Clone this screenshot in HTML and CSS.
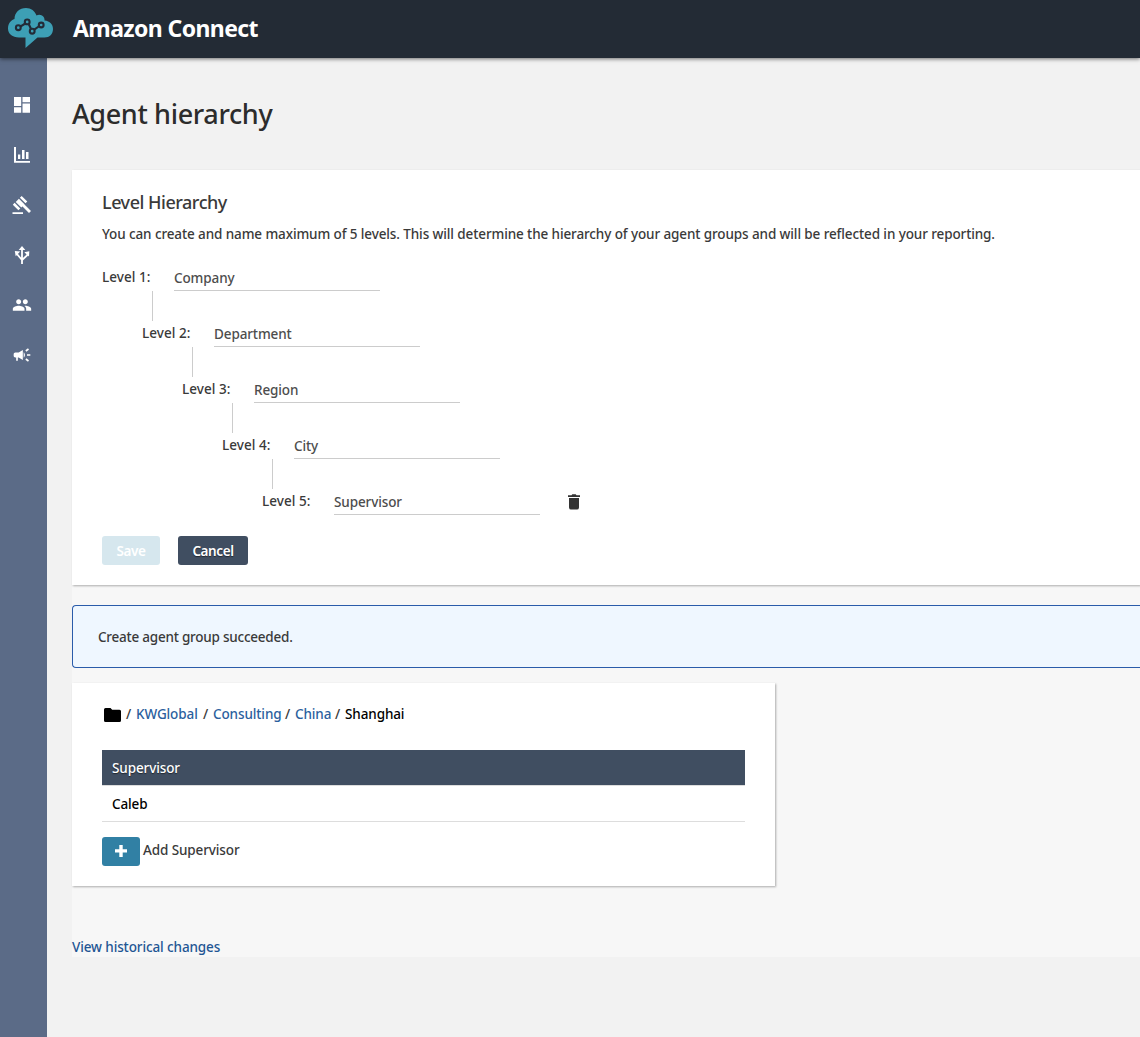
FILE: index.html
```html
<!DOCTYPE html>
<html lang="en">
<head>
<meta charset="utf-8">
<title>Amazon Connect - Agent hierarchy</title>
<link rel="stylesheet" href="styles.css">
</head>
<body>
<header class="topbar">
  <svg class="logo" width="46" height="40" viewBox="0 0 46 40">
    <path fill="#3d9fb5" d="M11 29.500C4.500 29.500 0 26 0 20.500C0 15.500 3 12 6.500 11C6.500 4.500 11.500 0 18 0C23 0 27 3 28.500 7.500C30 6.500 32 6.300 34 7.400C36 8.600 36.800 10.500 36.500 12.500C42 13 45 16.500 45 21C45 26 41.500 29.500 36.500 29.500H29.500L17.500 40V29.500Z"/>
    <g fill="none" stroke="#232b37" stroke-width="2.100">
      <path d="M12.300 18.700L17.300 15.500M20.600 15.800L23.200 21.300M26 21.900L31.300 18"/>
      <circle cx="10.300" cy="19.700" r="2.400"/><circle cx="19.200" cy="13.900" r="2.400"/><circle cx="24.200" cy="23.200" r="2.400"/><circle cx="33.200" cy="17" r="2.400"/>
    </g>
  </svg>
  <span class="brand">Amazon Connect</span>
</header>
<div class="shell">
  <nav class="sidebar">
    <a class="nav-item"><svg width="20" height="20" viewBox="0 0 20 20"><path d="M2 2h7.200v9H2zM2 12.200h7.200v5.600H2zM10.500 2H18v5.200h-7.500zM10.500 8.500H18v9.300h-7.500z"/></svg></a>
    <a class="nav-item"><svg width="20" height="20" viewBox="0 0 20 20"><path d="M2 2h2v14h14v1.800H2zM6 9.500h2.300V14H6zM10 5h2.500v9H10zM14 7h2.500v7H14z"/></svg></a>
    <a class="nav-item"><svg width="20" height="20" viewBox="0 0 20 20"><path d="M.500 17.200h10.500V19H.500zM9.700.900l5.600 5.500-1.800 1.800L7.900 2.700zM2.600 7.800l5.700 5.600-1.900 1.900L.800 9.700zM6.900 3.700l5.600 5.500-3.200 3.200-5.600-5.500zM12 9l7 7-2 2-7-7z"/></svg></a>
    <a class="nav-item"><svg width="20" height="20" viewBox="0 0 20 20"><g fill="none" stroke="#fff" stroke-width="1.800"><path d="M10 3v16M10 15L4.500 8.500M10 15l5-4.500 1-2"/></g><path d="M10 1l3.300 4H6.700zM2.800 6l5.400.600-4.500 4.700zM17.300 6.300l-.300 5.300-4.700-4.400z"/></svg></a>
    <a class="nav-item"><svg width="20" height="20" viewBox="0 0 24 24"><path d="M16 11c1.660 0 2.990-1.340 2.990-3S17.660 5 16 5s-3 1.340-3 3 1.340 3 3 3zm-8 0c1.660 0 2.990-1.340 2.990-3S9.660 5 8 5 5 6.340 5 8s1.340 3 3 3zm0 2c-2.330 0-7 1.170-7 3.500V19h14v-2.500c0-2.330-4.670-3.500-7-3.500zm8 0c-.290 0-.620.020-.970.050 1.160.840 1.970 1.970 1.970 3.450V19h6v-2.500c0-2.330-4.670-3.500-7-3.500z"/></svg></a>
    <a class="nav-item"><svg width="20" height="20" viewBox="0 0 24 24"><path d="M18 11v2h4v-2zM16 17.610c.960.710 2.210 1.650 3.200 2.390l1.200-1.600c-.990-.740-2.240-1.680-3.200-2.400zM20.400 5.600L19.200 4c-.990.740-2.240 1.680-3.200 2.400l1.200 1.600c.960-.720 2.210-1.650 3.200-2.400zM4 9c-1.100 0-2 .900-2 2v2c0 1.100.900 2 2 2h1v4h2v-4h1l5 3V6L8 9zM15.500 12c0-1.330-.580-2.530-1.500-3.350v6.690c.920-.810 1.500-2.010 1.500-3.340z"/></svg></a>
  </nav>
  <main class="main">
    <h1 class="page-title">Agent hierarchy</h1>
    <div class="content">
      <section class="card levels-card">
        <h2 class="card-title">Level Hierarchy</h2>
        <p class="description">You can create and name maximum of 5 levels. This will determine the hierarchy of your agent groups and will be reflected in your reporting.</p>
        <div class="levels">
          <div class="level"><span class="label">Level 1:</span><span class="field">Company</span></div>
          <div class="level"><span class="label">Level 2:</span><span class="field">Department</span></div>
          <div class="level"><span class="label">Level 3:</span><span class="field">Region</span></div>
          <div class="level"><span class="label">Level 4:</span><span class="field">City</span></div>
          <div class="level"><span class="label">Level 5:</span><span class="field">Supervisor</span>
            <svg class="trash" width="12" height="16" viewBox="0 0 12 16"><path fill="#333" d="M0 1.300h3.500L4.300.300h3.400l.800 1H12V3H0zM1 4h10v9.500a2 2 0 0 1-2 2H3a2 2 0 0 1-2-2z"/></svg>
          </div>
        </div>
        <div class="actions"><button class="btn save">Save</button><button class="btn cancel">Cancel</button></div>
      </section>
      <div class="alert">Create agent group succeeded.</div>
      <section class="card groups-card">
        <div class="crumbs">
          <svg class="folder" width="17" height="14" viewBox="0 0 17 14"><path d="M1.500 0h5L8.200 1.700h7.300A1.500 1.500 0 0 1 17 3.200v9.300a1.500 1.500 0 0 1-1.500 1.500h-14A1.500 1.500 0 0 1 0 12.500v-11A1.500 1.500 0 0 1 1.500 0z"/></svg>
          <span class="sep">/</span><a class="link kw">KWGlobal</a><span class="sep">/</span><a class="link consulting">Consulting</a><span class="sep">/</span><a class="link china">China</a><span class="sep">/</span><span class="current">Shanghai</span>
        </div>
        <div class="table-head">Supervisor</div>
        <div class="table-row">Caleb</div>
        <div class="add-row">
          <button class="add" aria-label="Add"><svg width="14" height="14" viewBox="0 0 14 14"><path fill="#fff" d="M5.300 1h3.400v4.300H13v3.200H8.700V13H5.300V8.500H1V5.300h4.300z"/></svg></button>
          <span class="add-label">Add Supervisor</span>
        </div>
      </section>
      <a class="history">View historical changes</a>
    </div>
  </main>
</div>
</body>
</html>
```
FILE: styles.css
```css
* { box-sizing: border-box; }
body {
  margin: 0;
  height: 1037px;
  overflow: hidden;
  display: flex;
  flex-direction: column;
  background: #f2f2f2;
  color: #3a3a3a;
  font: 500 13.500px/20px "Noto Sans", sans-serif;
  letter-spacing: -0.110px;
  white-space: nowrap;
}
.topbar {
  height: 58px;
  flex: none;
  display: flex;
  align-items: flex-start;
  padding: 8px 0 0 8px;
  background: #232b35;
  box-shadow: 0 1px 4px rgba(0, 0, 0, .55);
  position: relative;
}
.brand {
  margin-left: 19px;
  color: #fff;
  font-size: 23px;
  font-weight: 700;
  line-height: 40px;
  letter-spacing: -0.600px;
}
.shell { flex: 1; display: flex; }
.sidebar { width: 47px; flex: none; padding-top: 22px; background: #5b6b87; }
.nav-item { display: flex; height: 50px; padding-left: 12px; align-items: center; }
.nav-item svg { fill: #fff; }
.main { flex: 1; padding-left: 25px; }
.page-title {
  margin: 0;
  height: 112px;
  padding-top: 36px;
  color: #2c2c2c;
  font-size: 27px;
  font-weight: 500;
  line-height: 40px;
  letter-spacing: -0.350px;
}
.content { height: 787px; background: #f7f7f7; }
.card { background: #fff; box-shadow: 1px 1px 2px rgba(0, 0, 0, .3); }
.levels-card { height: 415px; padding: 20px 30px; }
.card-title { margin: 0; font-size: 18px; font-weight: 500; line-height: 24px; letter-spacing: -0.480px; }
.description { margin: 10px 0 21px; }
.level { display: flex; height: 56px; position: relative; }
.level:nth-child(2) { margin-left: 40px; }
.level:nth-child(3) { margin-left: 80px; }
.level:nth-child(4) { margin-left: 120px; }
.level:nth-child(5) { margin-left: 160px; height: 26px; }
.level:not(:last-child)::after {
  content: "";
  position: absolute;
  left: 50px;
  top: 26px;
  width: 1px;
  height: 30px;
  background: #ccc;
}
.label { width: 72px; line-height: 24px; letter-spacing: 0.050px; }
.field { width: 206px; height: 26px; line-height: 26px; border-bottom: 1px solid #ccc; color: #4d4d4d; }
.trash { margin: 5px 0 0 28px; }
.actions { display: flex; gap: 18px; margin-top: 21px; }
.btn {
  height: 29px;
  padding: 0;
  border: 0;
  border-radius: 3px;
  color: #fff;
  font: inherit;
  font-weight: 600;
  letter-spacing: -0.400px;
}
.save { width: 58px; background: #d6e7ee; }
.cancel { width: 70px; background: #404e61; text-shadow: 0 1px 1px rgba(0, 0, 0, .5); }
.alert {
  height: 63px;
  margin: 20px 0 15px;
  padding-left: 25px;
  border: 1px solid #2a5caa;
  border-right: 0;
  border-radius: 4px 0 0 4px;
  background: #eff7ff;
  line-height: 63px;
  letter-spacing: -0.230px;
}
.groups-card { width: 703px; height: 203px; padding: 20px 30px; }
.crumbs { display: flex; align-items: center; height: 22px; margin-bottom: 25px; }
.folder { margin: 2px 5px 0 2px; }
.sep { width: 10px; }
.link { color: #2b5f9e; }
.kw { width: 67px; }
.consulting { width: 72px; }
.china { width: 40px; }
.current { color: #000; }
.table-head { height: 35px; padding-left: 10px; background: #404e61; color: #fff; line-height: 36px; text-shadow: 0 1px 1px rgba(0, 0, 0, .5); }
.table-row { height: 37px; padding-left: 10px; border: solid #ddd; border-width: 1px 0; color: #000; line-height: 36px; }
.add-row { display: flex; gap: 3px; margin-top: 15px; }
.add { display: flex; align-items: center; justify-content: center; width: 38px; height: 29px; padding: 0 0 2px; border: 0; border-radius: 3px; background: #3180a4; }
.add-label { line-height: 26px; }
.history { display: block; margin-top: 51px; color: #1f5694; }
```
